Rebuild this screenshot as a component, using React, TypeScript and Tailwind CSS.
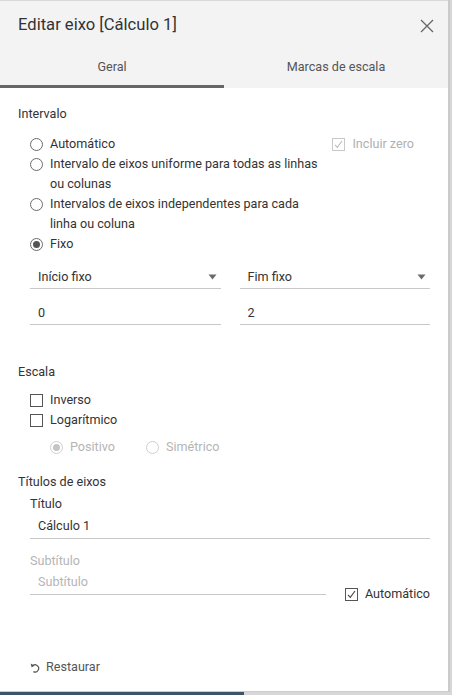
import React from "react";

const Radio = ({ checked, disabled }: { checked?: boolean; disabled?: boolean }) => (
  <span
    className={`flex h-[13px] w-[13px] shrink-0 items-center justify-center rounded-full border ${
      disabled ? "border-[#cfcfcf]" : "border-[#6b6b6b]"
    } bg-white`}
  >
    {checked && (
      <span className={`h-[7px] w-[7px] rounded-full ${disabled ? "bg-[#c4c4c4]" : "bg-[#555]"}`} />
    )}
  </span>
);

const Check = ({ checked, disabled }: { checked?: boolean; disabled?: boolean }) => (
  <span
    className={`flex h-[13px] w-[13px] shrink-0 items-center justify-center border ${
      disabled ? "border-[#c8c8c8]" : "border-[#555]"
    } bg-white`}
  >
    {checked && (
      <svg width="11" height="11" viewBox="0 0 11 11">
        <path
          d="M2 5.8 L4.3 8.3 L9 2"
          fill="none"
          stroke={disabled ? "#bdbdbd" : "#444"}
          strokeWidth="1.1"
        />
      </svg>
    )}
  </span>
);

const Caret = () => (
  <svg width="9" height="6" viewBox="0 0 9 6">
    <path d="M0.5 0.5 L8.5 0.5 L4.5 5.5 Z" fill="#6b6b6b" />
  </svg>
);

export default function App() {
  return (
    <div
      className="relative h-[695px] w-[452px] overflow-hidden bg-[#d7d7d7] text-[12.6px] text-[#333]"
      style={{ fontFamily: "Roboto, 'Noto Sans', sans-serif" }}
    >
      <div className="absolute bottom-0 left-0 h-[3px] w-[244px] bg-[#3e5268]" />
      <div className="flex h-[692px] w-[450px] flex-col border-r-2 border-b border-[#cbcbcb] bg-white">
        {/* Header */}
        <div className="h-[88px] shrink-0 border-t border-[#d9d9d9] bg-[#f3f3f3]">
          <div className="flex h-[49px] items-center justify-between pl-[18px] pr-[14px]">
            <span className="text-[16.6px] text-[#333]">Editar eixo [Cálculo 1]</span>
            <svg width="14" height="14" viewBox="0 0 14 14">
              <path d="M1 1 L13 13 M13 1 L1 13" stroke="#666" strokeWidth="1.3" fill="none" />
            </svg>
          </div>
          <div className="flex h-[38px]">
            <div className="flex w-[224px] flex-col">
              <div className="flex flex-1 items-center justify-center text-[#555]">Geral</div>
              <div className="h-[3px] bg-[#666]" />
            </div>
            <div className="flex flex-1 items-center justify-center pb-[3px] text-[#555]">
              Marcas de escala
            </div>
          </div>
        </div>

        {/* Body */}
        <div className="flex flex-1 flex-col pl-[18px] pr-[18px]">
          <div className="mt-[17px] leading-[18px]">Intervalo</div>

          <div className="mt-[11px] flex">
            <div className="flex flex-col pl-[12px] leading-[20px]">
              <div className="flex items-center gap-[7px]">
                <Radio /> <span>Automático</span>
              </div>
              <div className="flex items-start gap-[7px]">
                <span className="mt-[4px]">
                  <Radio />
                </span>
                <span>
                  Intervalo de eixos uniforme para todas as linhas
                  <br />
                  ou colunas
                </span>
              </div>
              <div className="flex items-start gap-[7px]">
                <span className="mt-[4px]">
                  <Radio />
                </span>
                <span>
                  Intervalos de eixos independentes para cada
                  <br />
                  linha ou coluna
                </span>
              </div>
              <div className="flex items-center gap-[7px]">
                <Radio checked /> <span>Fixo</span>
              </div>
            </div>
            <div className="ml-auto mr-[16px] flex h-[20px] items-center gap-[7px] text-[#b0b0b0]">
              <Check checked disabled />
              <span>Incluir zero</span>
            </div>
          </div>

          <div className="mt-[12px] grid grid-cols-2 gap-x-[19px] pl-[12px]">
            <div className="flex h-[23px] items-center justify-between border-b border-[#c8c8c8] pl-[8px] pr-[4px]">
              <span>Início fixo</span>
              <Caret />
            </div>
            <div className="flex h-[23px] items-center justify-between border-b border-[#c8c8c8] pl-[8px] pr-[4px]">
              <span>Fim fixo</span>
              <Caret />
            </div>
            <div className="mt-[13px] flex h-[23px] items-center border-b border-[#c8c8c8] pl-[8px]">0</div>
            <div className="mt-[13px] flex h-[23px] items-center border-b border-[#c8c8c8] pl-[8px]">2</div>
          </div>

          <div className="mt-[38px] leading-[18px]">Escala</div>
          <div className="mt-[9px] flex flex-col pl-[12px] leading-[20px]">
            <div className="flex items-center gap-[7px]">
              <Check /> <span>Inverso</span>
            </div>
            <div className="flex items-center gap-[7px]">
              <Check /> <span>Logarítmico</span>
            </div>
            <div className="mt-[7px] flex items-center pl-[20px] text-[#b5b5b5]">
              <div className="flex items-center gap-[7px]">
                <Radio checked disabled /> <span>Positivo</span>
              </div>
              <div className="ml-[31px] flex items-center gap-[7px]">
                <Radio disabled /> <span>Simétrico</span>
              </div>
            </div>
          </div>

          <div className="mt-[16px] leading-[18px]">Títulos de eixos</div>
          <div className="mt-[4px] pl-[12px]">
            <div className="leading-[18px]">Título</div>
            <div className="mt-[2px] flex h-[24px] items-center border-b border-[#c8c8c8] pl-[8px]">Cálculo 1</div>
            <div className="mt-[13px] leading-[18px] text-[#b5b5b5]">Subtítulo</div>
            <div className="mt-[1px] flex items-end">
              <div className="flex h-[24px] w-[296px] items-center border-b border-[#c8c8c8] pl-[8px] text-[#b5b5b5]">
                Subtítulo
              </div>
              <div className="mb-[-9px] ml-auto flex h-[20px] items-center gap-[7px]">
                <Check checked /> <span>Automático</span>
              </div>
            </div>
          </div>

          <div className="mt-auto mb-[14px] flex items-center gap-[6px] pl-[12px] text-[#555]">
            <svg width="10" height="11" viewBox="0 0 10 11">
              <path d="M2.2 4.2 A3.6 3.6 0 1 1 3.4 9.6" fill="none" stroke="#555" strokeWidth="1.2" />
              <path d="M0.6 1.6 L1.6 5.2 L4.8 3.8 Z" fill="#555" />
            </svg>
            <span>Restaurar</span>
          </div>
        </div>
      </div>
    </div>
  );
}
